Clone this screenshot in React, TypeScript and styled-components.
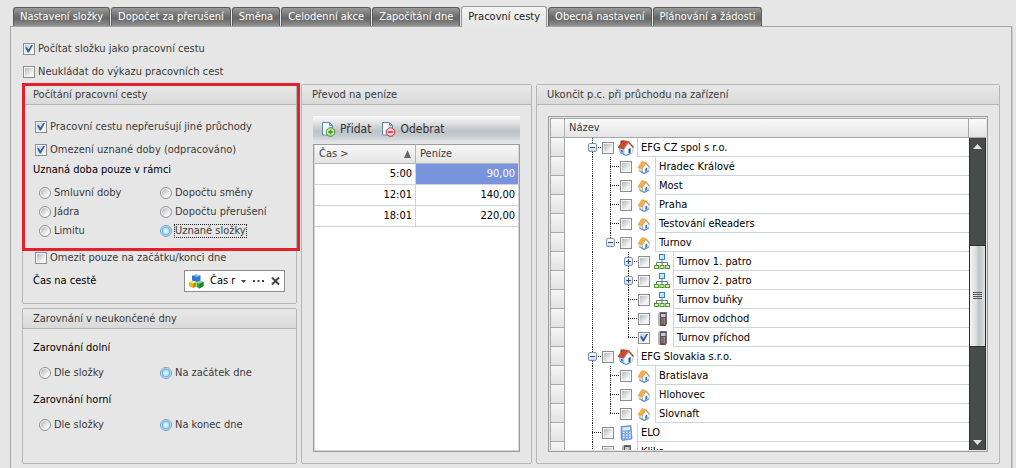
import React from "react";
import styled, { createGlobalStyle, css } from "styled-components";

const GlobalStyle = createGlobalStyle`
  * { box-sizing: border-box; }
  body {
    margin: 0;
    background: #e6e6e6;
    color: #3a3a3a;
    font: 11px/14px "DejaVu Sans Condensed", "DejaVu Sans", sans-serif;
  }
  button, input { font: inherit; color: inherit; margin: 0; }
`;

const Page = styled.main`
  height: 100vh;
  min-height: 440px;
  display: flex;
  flex-direction: column;
  padding: 6px 4px 0 10px;
`;

/* ---------- tabs ---------- */

const TabBar = styled.div`
  display: flex;
  align-items: flex-end;
  gap: 1px;
  padding-left: 3px;
  white-space: nowrap;
`;

const Tab = styled.button<{ $active?: boolean }>`
  height: 19px;
  padding: 0 6px;
  border: 1px solid #5c5c5c;
  border-bottom: 0;
  border-radius: 3px 3px 0 0;
  background: linear-gradient(#9a9a9a, #6f6f6f 45%, #686868 60%, #929292);
  color: #fff;
  line-height: 18px;
  ${(p) =>
    p.$active &&
    css`
      position: relative;
      height: 21px;
      margin-bottom: -1px;
      border-color: #999;
      background: linear-gradient(#f2f2f2, #e6e6e6);
      color: #222;
    `}
`;

const TabPanel = styled.section`
  flex: 1;
  min-height: 0;
  display: flex;
  flex-direction: column;
  padding: 10px 11px 4px;
  border: 1px solid #a6a6a6;
  border-bottom: 0;
  box-shadow: 1px 0 0 #cfcfcf;
`;

const TopOptions = styled.div`
  padding: 0 1px 1px;
`;

const Columns = styled.div`
  flex: 1;
  min-height: 0;
  display: grid;
  grid-template-columns: 275px 231px minmax(0, 1fr);
  grid-template-rows: minmax(0, 1fr);
  gap: 4px;
`;

const Stack = styled.div`
  position: relative;
  display: flex;
  flex-direction: column;
  gap: 4px;
`;

/* ---------- group boxes ---------- */

const Group = styled.section<{ $fill?: boolean }>`
  display: flex;
  flex-direction: column;
  min-height: 0;
  flex: ${(p) => (p.$fill ? "1" : "none")};
  border: 1px solid #b6b6b6;
  border-radius: 2px;
`;

const GroupTitle = styled.h2`
  margin: 0;
  height: 20px;
  padding: 0 10px;
  border-bottom: 1px solid #b6b6b6;
  background: linear-gradient(#e9e9e9, #d9d9d9);
  font-size: 11px;
  font-weight: 400;
  line-height: 20px;
`;

const FormBody = styled.div`
  padding: 10px 10px 11px;
`;

const GridBody = styled.div`
  flex: 1;
  min-height: 0;
  display: flex;
  flex-direction: column;
  padding: 11px;
`;

const Highlight = styled.div`
  position: absolute;
  top: -1px;
  left: 0;
  right: -3px;
  height: 168px;
  border: 3px solid #e3202b;
  pointer-events: none;
`;

/* ---------- form controls ---------- */

const CheckInput = styled.input.attrs({ type: "checkbox" })`
  appearance: none;
  flex: none;
  display: block;
  width: 12px;
  height: 12px;
  border: 1px solid #8b8d90;
  background: linear-gradient(135deg, #b4b7bb, #f4f4f4 75%) content-box, #f5f5f5;
  padding: 1px;
  &:checked::after {
    content: "";
    display: block;
    width: 8px;
    height: 8px;
    background: #34629f;
    clip-path: polygon(0 38%, 22% 30%, 42% 62%, 82% 0, 100% 6%, 50% 100%, 34% 100%);
  }
  &:checked {
    background: linear-gradient(135deg, #b9cbe0, #f4f8fc 75%) content-box, #f5f5f5;
  }
`;

const RadioInput = styled.input.attrs({ type: "radio" })`
  appearance: none;
  flex: none;
  display: block;
  width: 12px;
  height: 12px;
  border: 1px solid #8b8d90;
  border-radius: 50%;
  background: linear-gradient(135deg, #b0b3b7, #f6f6f6 75%) content-box, #f5f5f5;
  background-clip: content-box, border-box;
  padding: 1px;
  &:checked {
    border-color: #7f9fbc;
    background: radial-gradient(circle at 50% 50%, #e2f6ff 0 1px, #a9dcf8 3px, #6db9ea 3px 4px, #e6f4fc 5px);
  }
`;

const CheckRow = styled.label<{ $inset?: boolean }>`
  display: flex;
  align-items: center;
  gap: 3px;
  height: 23px;
  padding-left: ${(p) => (p.$inset ? "2px" : "0")};
  white-space: nowrap;
`;

const OptionGrid = styled.div<{ $row: number; $top?: number }>`
  display: grid;
  grid-template-columns: 121px 1fr;
  grid-auto-rows: ${(p) => p.$row}px;
  padding: ${(p) => p.$top ?? 0}px 0 0 6px;
`;

const RadioRow = styled.label<{ $focused?: boolean }>`
  display: flex;
  align-items: center;
  gap: 3px;
  white-space: nowrap;
  ${(p) =>
    p.$focused &&
    css`
      span {
        line-height: 12px;
        outline: 1px dotted #222;
      }
    `}
`;

const Caption = styled.h3`
  margin: 0;
  height: 18px;
  color: #000;
  font-size: 11px;
  font-weight: 400;
  line-height: 18px;
`;

const AfterOptions = styled.div`
  padding-top: 6px;
`;

const CaptionGap = styled.div`
  height: 2px;
`;

const FieldRow = styled.div`
  display: flex;
  justify-content: space-between;
  align-items: center;
  padding: 1px 1px 0 0;
  color: #000;
`;

const Picker = styled.div`
  display: flex;
  align-items: center;
  width: 101px;
  height: 22px;
  padding-left: 4px;
  border: 1px solid #8d8d8d;
  background: #fff;
`;

const PickerInput = styled.input`
  flex: 1;
  min-width: 0;
  width: 0;
  padding: 0 0 0 6px;
  border: 0;
  background: none;
  outline: 0;
`;

const PickerButton = styled.button`
  display: flex;
  align-items: center;
  justify-content: center;
  height: 20px;
  width: 16px;
  padding: 0;
  border: 0;
  background: none;
  &:first-of-type { width: 13px; }
  &:last-of-type { width: 18px; }
`;

/* ---------- rates grid ---------- */

const Toolbar = styled.div`
  display: flex;
  align-items: center;
  gap: 10px;
  height: 27px;
  padding: 0 8px 1px;
  border-bottom: 2px solid #e0e2e4;
  background: linear-gradient(#fbfbfb, #d9dbdd 35%, #bcc2c7 60%, #c6cbcf 80%, #dfe1e3);
`;

const ToolButton = styled.button`
  display: flex;
  align-items: center;
  gap: 4px;
  padding: 2px 0 0;
  border: 0;
  background: none;
  color: #333;
  font-size: 12px;
`;

const Frame = styled.div`
  position: relative;
  flex: 1;
  min-height: 0;
  display: flex;
  flex-direction: column;
  border: 1px solid #9c9c9c;
  background: #fff;
`;

const TableFrame = styled(Frame)`
  margin-top: 1px;
  box-shadow: inset 0 0 0 1px #d6d6d6;
  padding: 0 1px;
`;

const RateTable = styled.table`
  width: 100%;
  border-collapse: separate;
  border-spacing: 0;
  table-layout: fixed;
  th {
    height: 19px;
    padding: 0 4px;
    border-bottom: 1px solid #b4b4b4;
    border-right: 1px solid #b4b4b4;
    background: linear-gradient(#f8f8f8, #e4e4e4);
    font-weight: 400;
    text-align: left;
  }
  td {
    height: 21px;
    padding: 0 3px;
    border-bottom: 1px solid #ccd3dc;
    border-right: 1px solid #ccd3dc;
    color: #000;
    text-align: right;
  }
  th:first-child { width: 101px; }
  th:last-child, td:last-child { border-right: 0; }
`;

const SortHead = styled.div`
  display: flex;
  align-items: center;
  justify-content: space-between;
`;

const RateCell = styled.td<{ $selected?: boolean }>`
  && {
    ${(p) => p.$selected && "background: #7993dd; color: #fff;"}
  }
`;

/* ---------- device tree ---------- */

const TreeFrame = styled(Frame)`
  padding: 1px;
  background: #e6e6e6;
`;

const TreeHead = styled.div`
  display: flex;
  flex: none;
  height: 20px;
  border: solid #a6a6a6;
  border-width: 1px 0 1px 1px;
  background: linear-gradient(#fafafa, #e4e4e4);
  line-height: 18px;
`;

const HeadCorner = styled.div`
  width: 14px;
  border-right: 1px solid #b0b0b0;
`;

const HeadName = styled.div`
  flex: 1;
  padding-left: 4px;
`;

const HeadEnd = styled.div`
  width: 18px;
  border-left: 1px solid #a6a6a6;
`;

const TreeArea = styled.div`
  flex: 1;
  min-height: 0;
  display: flex;
  background: #fff;
`;

const TreeList = styled.ul`
  flex: 1;
  min-width: 0;
  margin: 0;
  padding: 0;
  overflow: hidden;
  list-style: none;
  color: #000;
`;

const TreeRow = styled.li`
  display: flex;
  height: 19px;
`;

const Indicator = styled.span`
  width: 15px;
  margin-right: 18px;
  border: solid #a9a9a9;
  border-width: 0 1px 1px;
  background: linear-gradient(#f6f6f6, #e2e2e2);
`;

type GuideKind = "none" | "line" | "tee" | "end";

const dotsDown = "repeating-linear-gradient(#222 0 1px, transparent 1px 2px)";
const dotsAcross = "repeating-linear-gradient(90deg, #222 0 1px, transparent 1px 2px)";
const guides: Record<GuideKind, string> = {
  none: "none",
  line: `${dotsDown} 9px 0 / 1px 100% no-repeat`,
  tee: `${dotsDown} 9px 0 / 1px 100% no-repeat, ${dotsAcross} 9px 9px / 9px 1px no-repeat`,
  end: `${dotsDown} 9px 0 / 1px 10px no-repeat, ${dotsAcross} 9px 9px / 9px 1px no-repeat`,
};

const Guide = styled.span<{ $kind: GuideKind }>`
  flex: none;
  width: 18px;
  height: 19px;
  padding: 5px 0 0 5px;
  background: ${(p) => guides[p.$kind]};
`;

const Expander = styled.button`
  display: block;
  width: 9px;
  height: 9px;
  padding: 0;
  border: 1px solid #7f93b5;
  border-radius: 2px;
  background: linear-gradient(#fff, #cfdcef);
  svg { display: block; }
`;

const NodeLabel = styled.label`
  flex: 1;
  min-width: 0;
  display: flex;
  align-items: center;
  padding-left: 1px;
  svg { flex: none; margin: 0 3px 0 4px; }
`;

const NodeName = styled.span`
  flex: 1;
  height: 19px;
  padding-left: 3px;
  border: solid #cdd3dc;
  border-width: 0 0 1px 1px;
  line-height: 19px;
  white-space: nowrap;
`;

const ScrollBar = styled.div`
  flex: none;
  display: flex;
  flex-direction: column;
  width: 17px;
  background: #4a4b4b;
  border: solid #2e2f2f;
  border-width: 0 1px;
`;

const ScrollArrow = styled.button`
  height: 16px;
  display: flex;
  align-items: center;
  justify-content: center;
  padding: 0;
  border: 0;
  background: none;
`;

const ScrollGap = styled.div<{ $share: number }>`
  flex: ${(p) => p.$share};
`;

const ScrollThumb = styled.div`
  height: 102px;
  display: flex;
  align-items: center;
  justify-content: center;
  border: solid #2e2f2f;
  border-width: 1px 0;
  background: linear-gradient(90deg, #f4f4f4, #dcdddf 40%, #bfc1c3 60%, #dfe0e1);
`;

/* ---------- icons ---------- */

const CompanyIcon = () => (
  <svg width="16" height="17" viewBox="0 0 16 17">
    <path d="M1.500 8v4.500L8 16.500V10z" fill="#b4cfee" stroke="#6f93c4" strokeWidth=".5" />
    <path d="M6 9.500L10.500 4 15 8.500l-.5 5L8 16.500l-2-1z" fill="#fafcff" stroke="#7f9fc8" strokeWidth=".5" />
    <path d="M2.500 1.500h2.500v3l-2.500 2z" fill="#8c3420" />
    <path d="M0 8.500L5 1.500l6 1L5.500 10z" fill="#cf4a2b" stroke="#97301a" strokeWidth=".5" />
    <path d="M10.500 3L15.500 8.500" stroke="#b93d22" strokeWidth="1.400" />
    <path d="M10.500 3L6 10" stroke="#e8856a" strokeWidth=".8" />
    <path d="M10.500 10l2.200-.9v4.400l-2.200 1z" fill="#1f55a0" />
    <path d="M3 10.500l1.800.9v2l-1.800-1z" fill="#2f6dba" />
    <path d="M2 13.500l6 3 5-2.300" stroke="#3f7cc4" strokeWidth=".9" fill="none" />
  </svg>
);

const BranchIcon = () => (
  <svg width="16" height="16" viewBox="0 0 16 16">
    <path d="M3 8v3.500L8 14V9z" fill="#f0d9a0" stroke="#b9a77a" strokeWidth=".4" />
    <path d="M6.500 9L10 4.500 13 8v3.500L8.500 14l-2-1z" fill="#f8fbff" stroke="#8fa9cc" strokeWidth=".6" />
    <path d="M2 8.500L6 2.500l4.200 1.200L6.200 9.500z" fill="#f5b04c" stroke="#cf8a30" strokeWidth=".5" />
    <path d="M10 3.800l3.600 4.500" stroke="#d8954a" strokeWidth="1.100" />
    <path d="M9.300 9.500l1.900-.9v3.400l-1.900 1z" fill="#3d6fb3" />
    <path d="M3.500 12l4.700 2.400L13 12" stroke="#6f97cb" strokeWidth="1.300" fill="none" />
  </svg>
);

const DepartmentIcon = () => (
  <svg width="16" height="16" viewBox="0 0 16 16" fill="none">
    <path d="M8 6v6M2.500 12V8.500h11V12" stroke="#6d7680" />
    <rect x="5.500" y=".5" width="5" height="5" fill="#c5e9fb" stroke="#2f87c8" />
    <rect x=".5" y="11.500" width="4" height="3" fill="#d6f5b8" stroke="#4f9a2c" />
    <rect x="6" y="11.500" width="4" height="3" fill="#d6f5b8" stroke="#4f9a2c" />
    <rect x="11.500" y="11.500" width="4" height="3" fill="#d6f5b8" stroke="#4f9a2c" />
  </svg>
);

const ReaderIcon = () => (
  <svg width="16" height="16" viewBox="0 0 16 16">
    <path d="M4 3l2-2h7v12l-1.500 2H6L4 14z" fill="#8d8688" />
    <path d="M4 3l2-1.500V15L4 14z" fill="#b9b3b6" />
    <path d="M6 1.500h6.500V13L11.500 15H6z" fill="#5d5153" />
    <path d="M7 3h4.500v3H7z" fill="#b9cfdf" />
    <path d="M7.500 8h1M9.500 8h1.500M7.500 10h1M9.500 10h1.500M7.500 12h1M9.500 12h1.500" stroke="#d0c8c4" />
    <path d="M10 13.500h1.500" stroke="#c8452e" />
  </svg>
);

const CalculatorIcon = () => (
  <svg width="16" height="16" viewBox="0 0 16 16">
    <path d="M3 1.500L13 .5l1 13.500-9.500 1.500L3 14z" fill="#7ba6e6" stroke="#4a78c0" strokeWidth=".6" />
    <path d="M4.500 2.800L12 2v3l-7.500.6z" fill="#e9f3fd" />
    <path d="M5 7.500h1.500M8 7.500h1.500M11 7.500h1.500M5 10h1.500M8 10h1.500M11 10h1.500M5 12.500h1.500M8 12.500h1.500M11 12.500h1.500" stroke="#e6f1fc" strokeWidth="1.500" />
  </svg>
);

const CubesIcon = () => (
  <svg width="15" height="15" viewBox="0 0 15 15">
    <path d="M3 1.500l4-1 4.500 1v5L8 8 3 6.500z" fill="#2f78d2" />
    <path d="M3 1.500l4-1 4.500 1L8 3z" fill="#8bbcf2" />
    <path d="M0 8l3-1 4 1.500v4L4 14 0 12z" fill="#f0b71c" />
    <path d="M0 8l3-1 4 1.500-3 1z" fill="#fde58a" />
    <path d="M4 9.500l3-1v4L4 14z" fill="#c98b0c" />
    <path d="M7.500 8.500l3.500-1.500 3.500 1v4l-4 2.500-3-1.500z" fill="#36a436" />
    <path d="M7.500 8.500l3.500-1.500 3.500 1-4 1.700z" fill="#8fe07f" />
    <path d="M10.500 9.700l4-1.700v4l-4 2.500z" fill="#23802a" />
  </svg>
);

const PageIcon = ({ kind }: { kind: "add" | "remove" }) => {
  const color = kind === "add" ? "#3f8f2e" : "#c22a36";
  const fill = kind === "add" ? "#c9edae" : "#f8d0d0";
  return (
    <svg width="15" height="16" viewBox="0 0 15 16" fill="none">
      <path d="M1.500 1.500h7l3 3v9.500h-10z" fill="#f7fbff" stroke="#5d88b8" />
      <path d="M8.500 1.500v3h3" stroke="#5d88b8" />
      <circle cx="9.500" cy="11" r="4.300" fill={fill} stroke={color} />
      <path d={kind === "add" ? "M7 11h5M9.500 8.500v5" : "M7 11h5"} stroke={color} strokeWidth="1.500" />
    </svg>
  );
};

/* ---------- data ---------- */

const icons = {
  company: CompanyIcon,
  branch: BranchIcon,
  department: DepartmentIcon,
  reader: ReaderIcon,
  calculator: CalculatorIcon,
};

interface TreeNode {
  name: string;
  icon: keyof typeof icons;
  guides: GuideKind[];
  expander?: "open" | "closed";
  checked?: boolean;
}

const nodes: TreeNode[] = [
  { name: "EFG CZ spol s r.o.", icon: "company", guides: ["tee"], expander: "open" },
  { name: "Hradec Králové", icon: "branch", guides: ["line", "tee"] },
  { name: "Most", icon: "branch", guides: ["line", "tee"] },
  { name: "Praha", icon: "branch", guides: ["line", "tee"] },
  { name: "Testování eReaders", icon: "branch", guides: ["line", "tee"] },
  { name: "Turnov", icon: "branch", guides: ["line", "end"], expander: "open" },
  { name: "Turnov 1. patro", icon: "department", guides: ["line", "none", "tee"], expander: "closed" },
  { name: "Turnov 2. patro", icon: "department", guides: ["line", "none", "tee"], expander: "closed" },
  { name: "Turnov buňky", icon: "department", guides: ["line", "none", "tee"] },
  { name: "Turnov odchod", icon: "reader", guides: ["line", "none", "tee"] },
  { name: "Turnov příchod", icon: "reader", guides: ["line", "none", "end"], checked: true },
  { name: "EFG Slovakia s.r.o.", icon: "company", guides: ["tee"], expander: "open" },
  { name: "Bratislava", icon: "branch", guides: ["line", "tee"] },
  { name: "Hlohovec", icon: "branch", guides: ["line", "tee"] },
  { name: "Slovnaft", icon: "branch", guides: ["line", "end"] },
  { name: "ELO", icon: "calculator", guides: ["tee"] },
  { name: "Klika", icon: "reader", guides: ["tee"] },
];

const tabs = [
  "Nastavení složky",
  "Dopočet za přerušení",
  "Směna",
  "Celodenní akce",
  "Započítání dne",
  "Pracovní cesty",
  "Obecná nastavení",
  "Plánování a žádosti",
];

const rates = [
  ["5:00", "90,00"],
  ["12:01", "140,00"],
  ["18:01", "220,00"],
];

const scopes = ["Smluvní doby", "Dopočtu směny", "Jádra", "Dopočtu přerušení", "Limitu", "Uznané složky"];

/* ---------- composed parts ---------- */

const Check = ({ text, checked, inset }: { text: string; checked?: boolean; inset?: boolean }) => (
  <CheckRow $inset={inset}>
    <CheckInput defaultChecked={checked} />
    <span>{text}</span>
  </CheckRow>
);

const Radio = ({ name, text, checked, focused }: { name: string; text: string; checked?: boolean; focused?: boolean }) => (
  <RadioRow $focused={focused}>
    <RadioInput name={name} defaultChecked={checked} />
    <span>{text}</span>
  </RadioRow>
);

const TreeItem = ({ node }: { node: TreeNode }) => {
  const Icon = icons[node.icon];
  const last = node.guides.length - 1;
  return (
    <TreeRow>
      <Indicator />
      {node.guides.map((kind, i) => (
        <Guide key={i} $kind={kind}>
          {i === last && node.expander && (
            <Expander aria-label={node.name} aria-expanded={node.expander === "open"}>
              <svg width="7" height="7" viewBox="0 0 7 7">
                <path d={node.expander === "open" ? "M1 3.500h5" : "M1 3.500h5M3.500 1v5"} stroke="#2f4a78" />
              </svg>
            </Expander>
          )}
        </Guide>
      ))}
      <NodeLabel>
        <CheckInput defaultChecked={node.checked} />
        <Icon />
        <NodeName>{node.name}</NodeName>
      </NodeLabel>
    </TreeRow>
  );
};

export default function App() {
  return (
    <>
      <GlobalStyle />
      <Page>
        <TabBar role="tablist">
          {tabs.map((t) => (
            <Tab key={t} role="tab" aria-selected={t === "Pracovní cesty"} $active={t === "Pracovní cesty"}>
              {t}
            </Tab>
          ))}
        </TabBar>
        <TabPanel role="tabpanel">
          <TopOptions>
            <Check text="Počítat složku jako pracovní cestu" checked />
            <Check text="Neukládat do výkazu pracovních cest" />
          </TopOptions>
          <Columns>
            <Stack>
              <Group>
                <GroupTitle>Počítání pracovní cesty</GroupTitle>
                <FormBody>
                  <Check inset text="Pracovní cestu nepřerušují jiné průchody" checked />
                  <Check inset text="Omezení uznané doby (odpracováno)" checked />
                  <Caption>Uznaná doba pouze v rámci</Caption>
                  <OptionGrid $row={19} $top={4}>
                    {scopes.map((s) => (
                      <Radio key={s} name="scope" text={s} checked={s === "Uznané složky"} focused={s === "Uznané složky"} />
                    ))}
                  </OptionGrid>
                  <AfterOptions>
                    <Check inset text="Omezit pouze na začátku/konci dne" />
                    <FieldRow>
                      <label htmlFor="travel-time">Čas na cestě</label>
                      <Picker>
                        <CubesIcon />
                        <PickerInput id="travel-time" defaultValue="Čas r" />
                        <PickerButton aria-label="Rozbalit">
                          <svg width="5" height="3" viewBox="0 0 5 3"><path d="M0 0h5L2.500 3z" fill="#444" /></svg>
                        </PickerButton>
                        <PickerButton aria-label="Vybrat">
                          <svg width="11" height="2" viewBox="0 0 11 2"><path d="M0 1h2M4.500 1h2M9 1h2" stroke="#444" strokeWidth="2" /></svg>
                        </PickerButton>
                        <PickerButton aria-label="Smazat">
                          <svg width="9" height="8" viewBox="0 0 9 8"><path d="M1 .5l7 7M8 .5l-7 7" stroke="#444" strokeWidth="2" /></svg>
                        </PickerButton>
                      </Picker>
                    </FieldRow>
                  </AfterOptions>
                </FormBody>
              </Group>
              <Group $fill>
                <GroupTitle>Zarovnání v neukončené dny</GroupTitle>
                <FormBody>
                  <Caption>Zarovnání dolní</Caption>
                  <OptionGrid $row={32}>
                    <Radio name="lower" text="Dle složky" />
                    <Radio name="lower" text="Na začátek dne" checked />
                  </OptionGrid>
                  <CaptionGap />
                  <Caption>Zarovnání horní</Caption>
                  <OptionGrid $row={32}>
                    <Radio name="upper" text="Dle složky" />
                    <Radio name="upper" text="Na konec dne" checked />
                  </OptionGrid>
                </FormBody>
              </Group>
              <Highlight />
            </Stack>
            <Group>
              <GroupTitle>Převod na peníze</GroupTitle>
              <GridBody>
                <Toolbar>
                  <ToolButton><PageIcon kind="add" />Přidat</ToolButton>
                  <ToolButton><PageIcon kind="remove" />Odebrat</ToolButton>
                </Toolbar>
                <TableFrame>
                  <RateTable>
                    <thead>
                      <tr>
                        <th>
                          <SortHead>
                            Čas &gt;
                            <svg width="7" height="8" viewBox="0 0 7 8"><path d="M3.500 0L7 8H0z" fill="#666" /></svg>
                          </SortHead>
                        </th>
                        <th>Peníze</th>
                      </tr>
                    </thead>
                    <tbody>
                      {rates.map(([time, money], i) => (
                        <tr key={time}>
                          <td>{time}</td>
                          <RateCell $selected={i === 0}>{money}</RateCell>
                        </tr>
                      ))}
                    </tbody>
                  </RateTable>
                </TableFrame>
              </GridBody>
            </Group>
            <Group>
              <GroupTitle>Ukončit p.c. při průchodu na zařízení</GroupTitle>
              <GridBody>
                <TreeFrame>
                  <TreeHead>
                    <HeadCorner />
                    <HeadName>Název</HeadName>
                    <HeadEnd />
                  </TreeHead>
                  <TreeArea>
                    <TreeList>
                      {nodes.map((n) => (
                        <TreeItem key={n.name} node={n} />
                      ))}
                    </TreeList>
                    <ScrollBar>
                      <ScrollArrow aria-label="Nahoru">
                        <svg width="9" height="5" viewBox="0 0 9 5"><path d="M4.500 0L9 5H0z" fill="#e2e2e2" /></svg>
                      </ScrollArrow>
                      <ScrollGap $share={23} />
                      <ScrollThumb>
                        <svg width="9" height="8" viewBox="0 0 9 8"><path d="M0 .5h9M0 2.500h9M0 4.500h9M0 6.500h9" stroke="#555" /></svg>
                      </ScrollThumb>
                      <ScrollGap $share={22} />
                      <ScrollArrow aria-label="Dolů">
                        <svg width="9" height="5" viewBox="0 0 9 5"><path d="M0 0h9L4.500 5z" fill="#e2e2e2" /></svg>
                      </ScrollArrow>
                    </ScrollBar>
                  </TreeArea>
                </TreeFrame>
              </GridBody>
            </Group>
          </Columns>
        </TabPanel>
      </Page>
    </>
  );
}
